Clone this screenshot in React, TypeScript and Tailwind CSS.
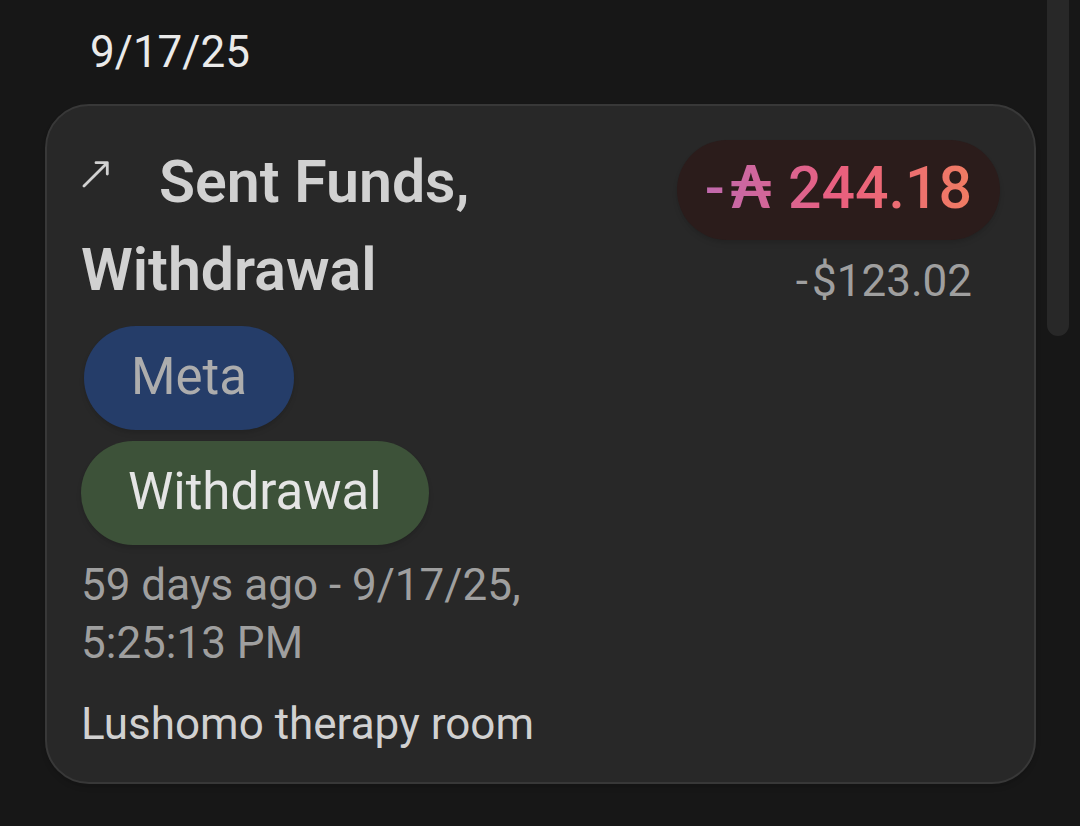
interface ITransaction {
  date: string;
  title: string;
  category: string;
  type: string;
  amount: string;
  fiatAmount: string;
  timeAgo: string;
  memo: string;
}

const transaction: ITransaction = {
  date: "9/17/25",
  title: "Sent Funds, Withdrawal",
  category: "Meta",
  type: "Withdrawal",
  amount: "244.18",
  fiatAmount: "$123.02",
  timeAgo: "59 days ago - 9/17/25, 5:25:13 PM",
  memo: "Lushomo therapy room",
};

function SentIcon() {
  return (
    <svg
      viewBox="0 0 28 42"
      className="mr-[50px] inline-block h-[42px] w-7 align-baseline"
      fill="none"
      stroke="currentColor"
      strokeWidth="2.8"
      strokeLinecap="round"
      strokeLinejoin="round"
      aria-hidden="true"
    >
      <path d="M3 26 26.3 2.7M15 2.7H26.3V14" />
    </svg>
  );
}

function TransactionCard({ data }: { data: ITransaction }) {
  return (
    <article className="flex items-start justify-between rounded-[44px] border-2 border-[#383838] bg-[#282828] px-[34px] pt-8 pb-[29px] shadow-md">
      <div className="flex min-w-0 max-w-[464px] flex-col items-start">
        <h2 className="text-[59px] leading-[88px] font-semibold text-[#d1d1d1]">
          <SentIcon />
          {data.title}
        </h2>
        <span className="mt-3 ml-[3px] rounded-full bg-[#253d69] px-[47px] pb-[2px] text-[51px] leading-[102px] text-[#adadad] shadow-md">
          {data.category}
        </span>
        <span className="mt-[11px] rounded-full bg-[#3d5239] px-[47px] pb-[2px] text-[51px] leading-[102px] text-[#e5e5e5] shadow-md">
          {data.type}
        </span>
        <p className="mt-[11px] text-[44px] leading-[58px] text-[#9f9f9f]">
          {data.timeAgo}
        </p>
        <p className="mt-[23px] text-[44px] leading-[58px] whitespace-nowrap text-[#d1d1d1]">
          {data.memo}
        </p>
      </div>
      <div className="mt-[2px] flex shrink-0 flex-col items-end">
        <div className="rounded-full bg-[#2b1c1b] px-7 pb-1 text-[59px] leading-[96px] font-medium shadow-md">
          <span className="block bg-linear-to-r from-[#c069ad] via-[#ea5f7e] to-[#f07c62] bg-clip-text text-transparent">
            <span className="mr-1">-</span>
            <span className="font-[Lato,sans-serif] leading-none font-bold">
              ₳
            </span>{" "}
            {data.amount}
          </span>
        </div>
        <p className="mt-3 mr-7 text-[44px] leading-[58px] text-[#9f9f9f]">
          <span className="mr-1">-</span>
          {data.fiatAmount}
        </p>
      </div>
    </article>
  );
}

export default function App() {
  return (
    <div className="flex min-h-screen items-start bg-[#171717] font-[Roboto,sans-serif]">
      <main className="min-w-0 flex-1 pl-[45px]">
        <h1 className="pt-5 pl-[45px] text-[44px] leading-[64px] text-[#eaeaea]">
          {transaction.date}
        </h1>
        <div className="mt-5">
          <TransactionCard data={transaction} />
        </div>
      </main>
      <div className="mx-[11px] h-[336px] w-[22px] rounded-b-full bg-[#282828]" />
    </div>
  );
}
